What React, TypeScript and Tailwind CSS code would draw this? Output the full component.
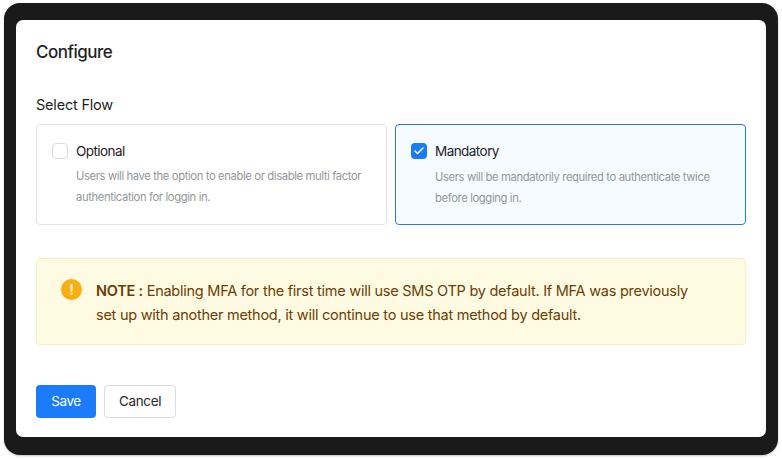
import { Check } from 'lucide-react'

function FlowCard({
  title,
  text,
  checked,
}: {
  title: string
  text: string
  checked?: boolean
}) {
  return (
    <div
      className={
        checked
          ? 'h-[101px] flex-1 rounded-[4px] border border-[#2f7cc8] bg-[#f6fbff] px-[15px] pt-[16px]'
          : 'h-[101px] flex-1 rounded-[4px] border border-[#e2e2e2] bg-white px-[15px] pt-[16px]'
      }
    >
      <div className="flex h-5 items-center gap-[8px]">
        {checked ? (
          <span className="flex h-4 w-4 items-center justify-center rounded-[4px] bg-[#1a7cf5]">
            <Check className="h-3 w-3 text-white" strokeWidth={3} />
          </span>
        ) : (
          <span className="h-4 w-4 rounded-[4px] border border-[#dcdcdc] bg-white" />
        )}
        <span className="text-[13.5px] tracking-[-0.55px] text-[#1f2328]">{title}</span>
      </div>
      <p
        className={
          checked
            ? 'mt-[5.5px] pl-[24px] text-[11.25px] leading-[21px] tracking-[-0.38px] text-[#94979b]'
            : 'mt-[5px] pl-[24px] text-[11.25px] leading-[21px] tracking-[-0.38px] text-[#94979b]'
        }
      >
        {text}
      </p>
    </div>
  )
}

export default function App() {
  return (
    <div className="h-[459px] w-[782px] bg-white pb-[4px] pl-[4px] pr-[4px] pt-[3px] font-['Inter',sans-serif]">
      <div className="h-[452px] rounded-[16px] bg-[#1a1a1a] pb-[18px] pl-[12px] pr-[12px] pt-[17px] shadow-[0_1px_2px_rgba(0,0,0,0.25)]">
        <div className="h-[417px] rounded-[7px] bg-white px-[20px] pt-[21px]">
          <h1 className="text-[17px] font-[450] leading-[22px] tracking-[-0.5px] text-[#1d1f22]">Configure</h1>
          <h2 className="mt-[32px] text-[14.5px] leading-[20px] tracking-[-0.2px] text-[#1d1f22]">Select Flow</h2>
          <div className="mt-[9px] flex gap-[8px]">
            <FlowCard
              title="Optional"
              text="Users will have the option to enable or disable multi factor authentication for loggin in."
            />
            <FlowCard
              checked
              title="Mandatory"
              text="Users will be mandatorily required to authenticate twice before logging in."
            />
          </div>
          <div className="mt-[33px] flex h-[87px] rounded-[4px] border border-[#fbeeb8] bg-[#fffbe2] pl-[24px] pr-[45px] pt-[20px]">
            <span className="flex h-[21px] w-[21px] shrink-0 items-center justify-center rounded-full bg-[#faad14] text-[14px] font-bold leading-none text-[#fff4d6]">
              !
            </span>
            <p className="ml-[14px] text-[14.5px] leading-[24px] tracking-[-0.25px] text-[#6b3d07]">
              <span className="font-semibold">NOTE :</span> Enabling MFA for the first time will use SMS OTP by default. If MFA was previously set up with another method, it will continue to use that method by default.
            </p>
          </div>
          <div className="mt-[40px] flex gap-[8px]">
            <button className="h-[33px] w-[60px] rounded-[4px] bg-[#1a7cfa] text-[13.5px] tracking-[-0.4px] text-white">Save</button>
            <button className="h-[33px] w-[72px] rounded-[4px] border border-[#dcdcdc] bg-white text-[13.5px] tracking-[-0.35px] text-[#26282b]">Cancel</button>
          </div>
        </div>
      </div>
    </div>
  )
}
